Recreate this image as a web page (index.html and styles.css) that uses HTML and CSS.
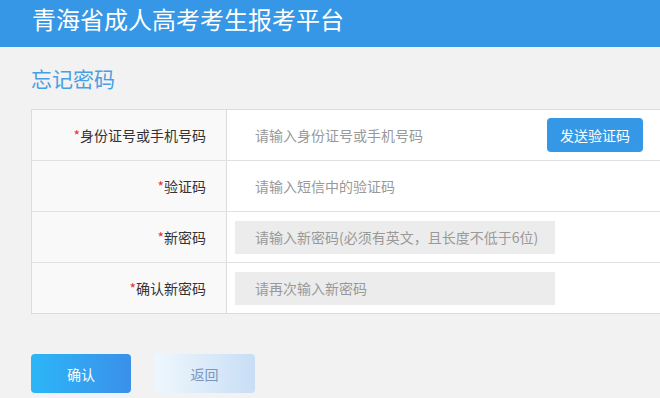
FILE: index.html
```html
<!DOCTYPE html>
<html>
	<head>
		<meta charset="utf-8" />
		<title>忘记密码</title>
		<link rel="stylesheet" href="styles.css">
	</head>
	<body>
		<div class="header">
			<h1 class="logo">青海省成人高考考生报考平台</h1>
		</div>
		<div class="main">
			<h2 class="title">忘记密码</h2>
			<div class="form">
				<div class="row">
					<div class="label"><i>*</i>身份证号或手机号码</div>
					<div class="field">
						<input class="ipt ipt_short" type="text" placeholder="请输入身份证号或手机号码" />
						<button class="send">发送验证码</button>
					</div>
				</div>
				<div class="row">
					<div class="label"><i>*</i>验证码</div>
					<div class="field">
						<input class="ipt" type="text" placeholder="请输入短信中的验证码" />
					</div>
				</div>
				<div class="row">
					<div class="label"><i>*</i>新密码</div>
					<div class="field">
						<input class="ipt ipt_gray" type="password" placeholder="请输入新密码(必须有英文，且长度不低于6位)" />
					</div>
				</div>
				<div class="row">
					<div class="label"><i>*</i>确认新密码</div>
					<div class="field">
						<input class="ipt ipt_gray" type="password" placeholder="请再次输入新密码" />
					</div>
				</div>
			</div>
			<div class="btns">
				<button class="btn_ok">确认</button>
				<button class="btn_back">返回</button>
			</div>
		</div>
	</body>
</html>
```

FILE: styles.css
```css
*{margin: 0;padding: 0;list-style: none;text-decoration: none;box-sizing: border-box;}
html,body{overflow: hidden;}
body{background: #f2f2f2;font-family: "Noto Sans CJK SC", "Liberation Sans", sans-serif;color: #333;font-size: 14px;}
.header{height: 47px;background: #3597e6;padding-left: 32px;}
.header > .logo{font-size: 24px;font-weight: normal;color: #fff;line-height: 38px;}
.main{padding-left: 31px;}
.main > .title{font-size: 21px;font-weight: normal;color: #4a9fe4;line-height: 28px;margin-top: 17px;height: 45px;}
.form{width: 720px;border: 1px solid #dcdcdc;border-right: none;background: #fff;}
.form > .row{display: flex;height: 51px;border-top: 1px solid #e0e0e0;}
.form > .row:first-child{border-top: none;height: 50px;}
.form > .row > .label{width: 195px;flex: none;background: #f9f9f9;border-right: 1px solid #dcdcdc;text-align: right;padding-right: 20px;line-height: 50px;color: #333;}
.form > .row > .label > i{font-style: normal;color: #e2323c;}
.form > .row > .field{flex: 1;display: flex;align-items: center;padding-left: 8px;}
.ipt{width: 320px;height: 33px;border: none;outline: none;background: #fff;padding-left: 20px;font-size: 14px;font-family: inherit;color: #333;}
.ipt::placeholder{color: #999;}
.ipt_short{width: 304px;}
.ipt_gray{background: #ececec;}
.send{width: 96px;height: 34px;margin-left: 8px;border: none;border-radius: 4px;background: #3598e6;color: #fff;font-size: 14px;font-family: inherit;}
.btns{display: flex;gap: 23px;margin-top: 40px;}
.btns > button{width: 100px;height: 39px;border: none;border-radius: 4px;font-size: 14px;font-family: inherit;}
.btn_ok{background: linear-gradient(to right, #2cb6f7, #3b90ea);color: #fff;}
.btn_back{width: 101px !important;background: linear-gradient(to right, #eff7fd, #c8def5);color: #7b97bd;}
```
